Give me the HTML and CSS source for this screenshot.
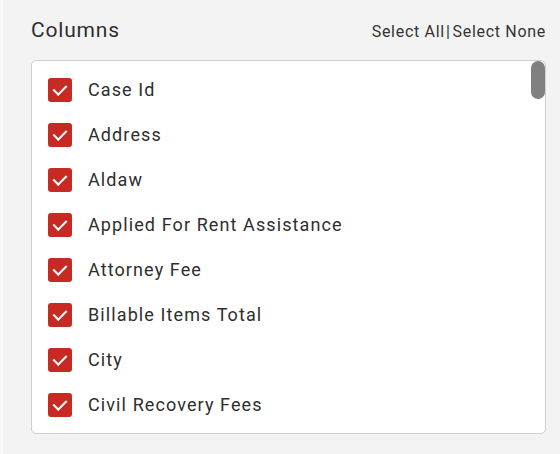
FILE: index.html
```html
<!DOCTYPE html>
<html lang="en">
<head>
  <meta charset="UTF-8">
  <title>Columns</title>
  <link rel="stylesheet" href="styles.css">
</head>
<body>
  <div class="panel">
    <div class="panel-head">
      <h2>Columns</h2>
      <div class="select-links"><a href="javascript:;">Select All</a><span class="sep">|</span><a href="javascript:;">Select None</a></div>
    </div>
    <div class="list-box">
      <ul class="col-list">
        <li><span class="check"></span>Case Id</li>
        <li><span class="check"></span>Address</li>
        <li><span class="check"></span>Aldaw</li>
        <li><span class="check"></span>Applied For Rent Assistance</li>
        <li><span class="check"></span>Attorney Fee</li>
        <li><span class="check"></span>Billable Items Total</li>
        <li><span class="check"></span>City</li>
        <li><span class="check"></span>Civil Recovery Fees</li>
      </ul>
      <div class="scroll-thumb"></div>
    </div>
  </div>
</body>
</html>
```

FILE: styles.css
```css
html, body {
  margin: 0;
  padding: 0;
  height: 100%;
  overflow: hidden;
}
body {
  background-color: #fafafa;
  color: #2e2e2e;
  font-family: Roboto, "Liberation Sans", sans-serif;
}
.panel {
  margin-left: 3px;
  height: 100%;
  background-color: #f3f3f3;
  padding: 15px 14px 0 28px;
  box-sizing: border-box;
}
.panel-head {
  display: flex;
  justify-content: space-between;
  align-items: baseline;
  height: 45px;
}
.panel-head h2 {
  margin: 0;
  font-size: 21px;
  font-weight: 400;
  letter-spacing: 0.8px;
  line-height: 30px;
}
.select-links {
  font-size: 16px;
  letter-spacing: 0.7px;
  color: #333;
}
.select-links a {
  color: #333;
  text-decoration: none;
}
.select-links .sep {
  margin: 0 2px 0 1px;
}
.list-box {
  position: relative;
  height: 374px;
  background: #fff;
  border: 1px solid #cfcfcf;
  border-radius: 5px;
  overflow: hidden;
  box-sizing: border-box;
}
.col-list {
  list-style: none;
  margin: 0;
  padding: 6px 0 0 16px;
}
.col-list li {
  display: flex;
  align-items: center;
  height: 45px;
  font-size: 18px;
  letter-spacing: 1.1px;
  color: #2e2e2e;
}
.check {
  position: relative;
  width: 24px;
  height: 24px;
  border-radius: 3px;
  background: #c62a22;
  margin-right: 16px;
  flex: none;
}
.check::after {
  content: "";
  position: absolute;
  left: 8px;
  top: 4px;
  width: 6px;
  height: 11px;
  border: solid #fff;
  border-width: 0 2.5px 2.5px 0;
  transform: rotate(45deg);
}
.scroll-thumb {
  position: absolute;
  top: 0;
  right: 0;
  width: 14px;
  height: 38px;
  border-radius: 7px;
  background: #808080;
}
```
